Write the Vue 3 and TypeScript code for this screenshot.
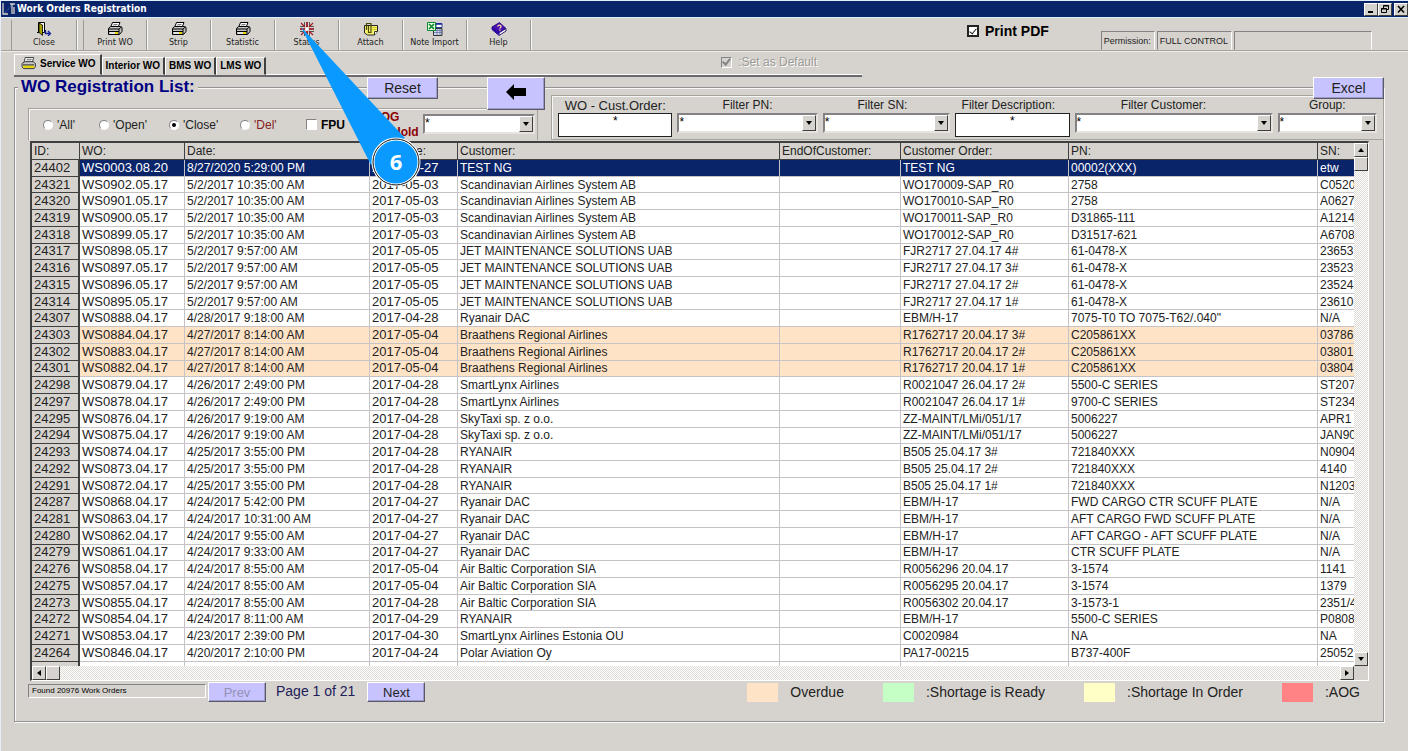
<script setup lang="ts">
import { ref } from 'vue'

type Tool = { label: string; icon: string }
type Row = {
  id: string
  wo: string
  date: string
  due: string
  customer: string
  order: string
  pn: string
  sn: string
  overdue: boolean
}

const tools: Tool[] = [
  { label: 'Print WO', icon: 'printer' },
  { label: 'Strip', icon: 'printer' },
  { label: 'Statistic', icon: 'printer' },
  { label: 'Status', icon: 'status' },
  { label: 'Attach', icon: 'attach' },
  { label: 'Note Import', icon: 'import' },
  { label: 'Help', icon: 'help' },
]

const tabs = ['Service WO', 'Interior WO', 'BMS WO', 'LMS WO']
const states = ['All', 'Open', 'Close', 'Del']
const state = ref('Close')
const fpu = ref(false)
const printPdf = ref(true)
const selected = ref('24402')

const filters = [
  { key: 'order', label: 'WO - Cust.Order:', kind: 'text', big: true },
  { key: 'pn', label: 'Filter PN:', kind: 'select' },
  { key: 'sn', label: 'Filter SN:', kind: 'select' },
  { key: 'description', label: 'Filter Description:', kind: 'text' },
  { key: 'customer', label: 'Filter Customer:', kind: 'select' },
  { key: 'group', label: 'Group:', kind: 'select' },
]

const columns = [
  { key: 'id', label: 'ID:' },
  { key: 'wo', label: 'WO:' },
  { key: 'date', label: 'Date:' },
  { key: 'due', label: 'Due Date:' },
  { key: 'customer', label: 'Customer:' },
  { key: 'end', label: 'EndOfCustomer:' },
  { key: 'order', label: 'Customer Order:' },
  { key: 'pn', label: 'PN:' },
  { key: 'sn', label: 'SN:' },
]

const source = `24402|WS0003.08.20|8/27/2020 5:29:00 PM|2020-08-27|TEST NG|TEST NG|00002(XXX)|etw
24321|WS0902.05.17|5/2/2017 10:35:00 AM|2017-05-03|Scandinavian Airlines System AB|WO170009-SAP_R0|2758|C0520
24320|WS0901.05.17|5/2/2017 10:35:00 AM|2017-05-03|Scandinavian Airlines System AB|WO170010-SAP_R0|2758|A0627
24319|WS0900.05.17|5/2/2017 10:35:00 AM|2017-05-03|Scandinavian Airlines System AB|WO170011-SAP_R0|D31865-111|A1214
24318|WS0899.05.17|5/2/2017 10:35:00 AM|2017-05-03|Scandinavian Airlines System AB|WO170012-SAP_R0|D31517-621|A6708
24317|WS0898.05.17|5/2/2017 9:57:00 AM|2017-05-05|JET MAINTENANCE SOLUTIONS UAB|FJR2717 27.04.17 4#|61-0478-X|23653
24316|WS0897.05.17|5/2/2017 9:57:00 AM|2017-05-05|JET MAINTENANCE SOLUTIONS UAB|FJR2717 27.04.17 3#|61-0478-X|23523
24315|WS0896.05.17|5/2/2017 9:57:00 AM|2017-05-05|JET MAINTENANCE SOLUTIONS UAB|FJR2717 27.04.17 2#|61-0478-X|23524
24314|WS0895.05.17|5/2/2017 9:57:00 AM|2017-05-05|JET MAINTENANCE SOLUTIONS UAB|FJR2717 27.04.17 1#|61-0478-X|23610
24307|WS0888.04.17|4/28/2017 9:18:00 AM|2017-04-28|Ryanair DAC|EBM/H-17|7075-T0 TO 7075-T62/.040"|N/A
24303|WS0884.04.17|4/27/2017 8:14:00 AM|2017-05-04|Braathens Regional Airlines|R1762717 20.04.17 3#|C205861XX|03786|o
24302|WS0883.04.17|4/27/2017 8:14:00 AM|2017-05-04|Braathens Regional Airlines|R1762717 20.04.17 2#|C205861XX|03801|o
24301|WS0882.04.17|4/27/2017 8:14:00 AM|2017-05-04|Braathens Regional Airlines|R1762717 20.04.17 1#|C205861XX|03804|o
24298|WS0879.04.17|4/26/2017 2:49:00 PM|2017-04-28|SmartLynx Airlines|R0021047 26.04.17 2#|5500-C SERIES|ST207
24297|WS0878.04.17|4/26/2017 2:49:00 PM|2017-04-28|SmartLynx Airlines|R0021047 26.04.17 1#|9700-C SERIES|ST234
24295|WS0876.04.17|4/26/2017 9:19:00 AM|2017-04-28|SkyTaxi sp. z o.o.|ZZ-MAINT/LMi/051/17|5006227|APR1
24294|WS0875.04.17|4/26/2017 9:19:00 AM|2017-04-28|SkyTaxi sp. z o.o.|ZZ-MAINT/LMi/051/17|5006227|JAN90
24293|WS0874.04.17|4/25/2017 3:55:00 PM|2017-04-28|RYANAIR|B505 25.04.17 3#|721840XXX|N0904
24292|WS0873.04.17|4/25/2017 3:55:00 PM|2017-04-28|RYANAIR|B505 25.04.17 2#|721840XXX|4140
24291|WS0872.04.17|4/25/2017 3:55:00 PM|2017-04-28|RYANAIR|B505 25.04.17 1#|721840XXX|N1203
24287|WS0868.04.17|4/24/2017 5:42:00 PM|2017-04-27|Ryanair DAC|EBM/H-17|FWD CARGO CTR SCUFF PLATE|N/A
24281|WS0863.04.17|4/24/2017 10:31:00 AM|2017-04-27|Ryanair DAC|EBM/H-17|AFT CARGO FWD SCUFF PLATE|N/A
24280|WS0862.04.17|4/24/2017 9:55:00 AM|2017-04-27|Ryanair DAC|EBM/H-17|AFT CARGO - AFT SCUFF PLATE|N/A
24279|WS0861.04.17|4/24/2017 9:33:00 AM|2017-04-27|Ryanair DAC|EBM/H-17|CTR SCUFF PLATE|N/A
24276|WS0858.04.17|4/24/2017 8:55:00 AM|2017-05-04|Air Baltic Corporation SIA|R0056296 20.04.17|3-1574|1141
24275|WS0857.04.17|4/24/2017 8:55:00 AM|2017-05-04|Air Baltic Corporation SIA|R0056295 20.04.17|3-1574|1379
24273|WS0855.04.17|4/24/2017 8:55:00 AM|2017-04-28|Air Baltic Corporation SIA|R0056302 20.04.17|3-1573-1|2351/4
24272|WS0854.04.17|4/24/2017 8:11:00 AM|2017-04-29|RYANAIR|EBM/H-17|5500-C SERIES|P0808
24271|WS0853.04.17|4/23/2017 2:39:00 PM|2017-04-30|SmartLynx Airlines Estonia OU|C0020984|NA|NA
24264|WS0846.04.17|4/20/2017 2:10:00 PM|2017-04-24|Polar Aviation Oy|PA17-00215|B737-400F|25052`

const rows: Row[] = source.split('\n').map((line) => {
  const [id, wo, date, due, customer, order, pn, sn, flag] = line.split('|')
  return { id, wo, date, due, customer, order, pn, sn, overdue: flag === 'o' }
})

const legend = [
  { tone: 'overdue', label: 'Overdue' },
  { tone: 'ready', label: ':Shortage is Ready' },
  { tone: 'ordered', label: ':Shortage In Order' },
  { tone: 'urgent', label: ':AOG' },
]
</script>

<template>
  <div class="window">
    <svg class="defs" aria-hidden="true">
      <symbol id="i-printer" viewBox="0 0 16 14">
        <path d="M5.500.5h7.500l-2 5h-7.500z" fill="#fff" stroke="#000" />
        <path d="M6.500 2.500h4M5.500 4.200h4" stroke="#555" stroke-width=".8" />
        <path d="M1.500 6.500l2-2h10l1.500 1v4l-2.500 3h-11z" fill="#c6c3c6" stroke="#000" />
        <path d="M1.500 7h10.500l2.500-2M12 7v5M2 9.500h10" stroke="#000" fill="none" />
        <path d="M3 11h6" stroke="#fff" stroke-width="1.200" />
        <path d="M8 11h3" stroke="#e7d700" stroke-width="2" />
      </symbol>
    </svg>

    <header class="titlebar">
      <svg class="app-icon" viewBox="0 0 14 14" aria-hidden="true">
        <path d="M1 1v11h5M8 2h5M10 2v10M12 5v7" fill="none" stroke="#d6d3ce" stroke-width="1.300" />
        <path d="M3 11L9 4" stroke="#4a82d6" stroke-dasharray="1 1" />
      </svg>
      <h1>Work Orders Registration</h1>
      <div class="win-buttons">
        <button type="button" aria-label="Minimize">
          <svg viewBox="0 0 12 11"><path d="M3 8h5" stroke="#000" stroke-width="2" /></svg>
        </button>
        <button type="button" aria-label="Restore">
          <svg viewBox="0 0 12 11"><path d="M4.500 4V1.500h5v4H8M4 2h6M2.500 4.500h5v4h-5zM2 5h6" fill="none" stroke="#000" /></svg>
        </button>
        <button type="button" aria-label="Close window">
          <svg viewBox="0 0 12 11"><path d="M3 2l6 6.500M9 2L3 8.500" stroke="#000" stroke-width="1.600" /></svg>
        </button>
      </div>
    </header>

    <div class="toolbar">
      <button type="button" class="tool close-tool">
        <svg viewBox="0 0 16 14" aria-hidden="true">
          <path d="M1 10.500h4" stroke="#000" />
          <path d="M2.500.5h6v10h-6z" fill="#fff" stroke="#000" />
          <path d="M3 1l3.500 2v10.500L3 10.500z" fill="#a5a200" stroke="#000" stroke-width=".8" />
          <path d="M9.500 8v3.500h4M12 9l2.500 2.500L12 14" fill="none" stroke="#10209c" stroke-width="1.300" />
        </svg>
        <span>Close</span>
      </button>
      <button v-for="t in tools" :key="t.label" type="button" class="tool">
        <svg v-if="t.icon === 'printer'" viewBox="0 0 16 14" aria-hidden="true"><use href="#i-printer" /></svg>
        <svg v-else-if="t.icon === 'status'" viewBox="0 0 16 14" aria-hidden="true">
          <path d="M8 0v5M8 9v5M1 7h5M10 7h5" stroke="#8c0010" stroke-width="1.600" />
          <path d="M5.500 0v4.500M10.500 0v4.500M5.500 9.500V14M10.500 9.500V14M1 4.500h4.500M10.500 4.500H15M1 9.500h4.500M10.500 9.500H15" stroke="#333" stroke-width=".8" />
          <path d="M2 1l4 4M14 1l-4 4M2 13l4-4M14 13l-4-4" stroke="#a51826" stroke-width="1.200" />
          <circle cx="8" cy="7" r="1.500" fill="#fff" />
        </svg>
        <svg v-else-if="t.icon === 'attach'" viewBox="0 0 16 14" aria-hidden="true">
          <path d="M1.500 3.500h13v6l-3 3.500h-7l-3-2z" fill="#f7f373" stroke="#222" />
          <path d="M11.500 13v-3.500h3" fill="#fff" stroke="#222" stroke-width=".9" />
          <path d="M9.500 5.500h4M9.500 7.500h4" stroke="#c6b600" stroke-width=".8" />
          <path d="M3.500 8V1.500h4.500v9H5.500V4" fill="none" stroke="#4a4800" stroke-width="1.200" />
        </svg>
        <svg v-else-if="t.icon === 'import'" viewBox="0 0 16 14" aria-hidden="true">
          <path d="M9 1.500h6v4H9z" fill="#fff" stroke="#31419c" />
          <path d="M9 2h6" stroke="#10209c" stroke-width="1.500" />
          <path d="M6.500 6.500h8.500v7H6.500z" fill="#d6dbef" stroke="#333" />
          <path d="M7 8.500h8M7 10.500h8M10 7v6M13 7v6" stroke="#52699c" stroke-width=".7" />
          <path d="M.5.500h8v8h-8z" fill="#e7ffe7" stroke="#108a31" />
          <path d="M2 2l5 5M7 2L2 7" stroke="#10862a" stroke-width="1.700" />
        </svg>
        <svg v-else viewBox="0 0 16 14" aria-hidden="true">
          <path d="M1 5l7.500-4.500 6.500 6-6.500 4z" fill="#4a10b5" stroke="#18006b" stroke-width=".8" />
          <path d="M1 5v2.500l7 6 7-4.500V6.500l-6.500 4z" fill="#fff" stroke="#18006b" stroke-width=".9" />
          <path d="M1 5l7.500 5.500v3L1 7.500z" fill="#2900a5" />
          <path d="M6.500 4.500q1.500-2.500 3.500-.5 .5 1.500-1.500 2.500M9 7.500v1.200" fill="none" stroke="#ffdb9c" stroke-width="1.300" />
        </svg>
        <span>{{ t.label }}</span>
      </button>
      <label class="print-pdf">
        <input v-model="printPdf" type="checkbox" />
        <span>Print PDF</span>
      </label>
      <div class="status-cells">
        <span>Permission:</span>
        <span>FULL CONTROL</span>
        <span class="status-blank"></span>
      </div>
    </div>

    <nav class="tabs">
      <button v-for="(t, i) in tabs" :key="t" type="button" :class="['tab', { active: i === 0 }]">
        <svg v-if="i === 0" viewBox="0 0 16 14" aria-hidden="true">
          <path d="M4.500.5h9l-1.500 6h-9z" fill="#fff" stroke="#333" />
          <path d="M6 2.500h5.500M5.500 4.500H11" stroke="#666" />
          <path d="M1 7l3-2h9l2.500 2v3.500L14 12.500H2.500L1 10.500z" fill="#c6c3c6" stroke="#333" />
          <path d="M2 10.500h12" stroke="#e7d700" stroke-width="2.500" />
          <path d="M2 8.500h12" stroke="#222" />
        </svg>
        {{ t }}
      </button>
      <label class="set-default">
        <input type="checkbox" checked disabled />
        <span>:Set as Default</span>
      </label>
    </nav>

    <main class="panel">
      <div class="panel-head">
        <h2>WO Registration List:</h2>
        <button type="button" class="btn reset">Reset</button>
        <button type="button" class="btn back" aria-label="Back">
          <svg viewBox="0 0 20 18"><path d="M0 9l8-8v4h12v8H8v4z" fill="#000" /></svg>
        </button>
        <button type="button" class="btn excel">Excel</button>
      </div>

      <div class="filters">
        <div class="state-box">
          <label v-for="s in states" :key="s" :class="['radio', { del: s === 'Del' }]">
            <input v-model="state" type="radio" name="state" :value="s" />
            <span>'{{ s }}'</span>
          </label>
          <label class="fpu">
            <input v-model="fpu" type="checkbox" />
            <span>FPU</span>
          </label>
          <label class="aog" for="hold"><span>AOG</span><span class="hold">Hold</span></label>
          <div class="combo hold-combo">
            <select id="hold"><option>*</option></select>
            <i></i>
          </div>
        </div>
        <div class="filter-box">
          <div v-for="f in filters" :key="f.key" :class="['filter', 'f-' + f.key]">
            <label :for="f.key" :class="{ big: f.big }">{{ f.label }}</label>
            <input v-if="f.kind === 'text'" :id="f.key" type="text" value="*" />
            <div v-else class="combo">
              <select :id="f.key"><option>*</option></select>
              <i></i>
            </div>
          </div>
        </div>
      </div>

      <section class="grid">
        <div class="viewport">
          <table>
            <colgroup>
              <col v-for="c in columns" :key="c.key" :class="'c-' + c.key" />
            </colgroup>
            <thead>
              <tr><th v-for="c in columns" :key="c.key" scope="col">{{ c.label }}</th></tr>
            </thead>
            <tbody>
              <tr
                v-for="r in rows"
                :key="r.id"
                :class="{ overdue: r.overdue, selected: r.id === selected }"
                @click="selected = r.id"
              >
                <th scope="row">{{ r.id }}</th>
                <td class="num">{{ r.wo }}</td>
                <td>{{ r.date }}</td>
                <td class="num">{{ r.due }}</td>
                <td>{{ r.customer }}</td>
                <td></td>
                <td>{{ r.order }}</td>
                <td>{{ r.pn }}</td>
                <td>{{ r.sn }}</td>
              </tr>
              <tr class="rest">
                <th></th>
                <td v-for="n in 8" :key="n"></td>
              </tr>
            </tbody>
          </table>
        </div>
        <div class="vbar">
          <button type="button" aria-label="Scroll up"><i class="up"></i></button>
          <span class="thumb"></span>
          <button type="button" class="end" aria-label="Scroll down"><i class="down"></i></button>
        </div>
        <div class="hbar">
          <button type="button" aria-label="Scroll left"><i class="left"></i></button>
          <span class="thumb"></span>
          <button type="button" class="end" aria-label="Scroll right"><i class="right"></i></button>
        </div>
      </section>

      <footer class="foot">
        <span class="found">Found 20976 Work Orders</span>
        <button type="button" class="btn" disabled>Prev</button>
        <span class="page">Page 1 of 21</span>
        <button type="button" class="btn">Next</button>
        <ul class="legend">
          <li v-for="l in legend" :key="l.tone" :class="l.tone">
            <i></i><span>{{ l.label }}</span>
          </li>
        </ul>
      </footer>
    </main>

    <svg class="callout" width="130" height="170" viewBox="0 0 130 170" role="img" aria-label="Step 6">
      <path d="M6 6L110 117L76 144z" fill="#0a9aff" />
      <circle cx="101" cy="141" r="23" fill="#0a9aff" stroke="#fff" stroke-width="3" />
      <circle cx="101" cy="141" r="23" fill="none" stroke="#111" stroke-width="1" />
      <text x="101" y="149" text-anchor="middle">6</text>
    </svg>
  </div>
</template>

<style>
html,
body {
  margin: 0;
  background: #d6d3ce;
}
</style>

<style scoped>
* {
  box-sizing: border-box;
}
.window {
  position: relative;
  display: flex;
  flex-direction: column;
  height: 100vh;
  padding-bottom: 29px;
  border-left: 1px solid #e7effa;
  background: #d6d3ce;
  color: #222;
  font-family: "Liberation Sans", Arial, sans-serif;
  font-size: 12px;
}
.defs {
  position: absolute;
  width: 0;
  height: 0;
}
button,
input,
select {
  margin: 0;
  padding: 0;
  border-radius: 0;
  color: inherit;
  font: inherit;
}
.titlebar {
  display: flex;
  flex: none;
  align-items: center;
  height: 18px;
  padding-left: 1px;
  border-top: 1px solid #dff0fa;
  border-bottom: 1px solid #dff0fa;
  background: #0a246a;
  color: #fff;
}
.app-icon {
  width: 14px;
  height: 14px;
  margin-right: 1px;
}
h1 {
  margin: 0;
  font-family: "DejaVu Sans Condensed", "DejaVu Sans", sans-serif;
  font-size: 10px;
  line-height: 14px;
}
.win-buttons {
  display: flex;
  margin-left: auto;
}
.win-buttons button {
  display: flex;
  width: 14px;
  height: 13px;
  border: 1px solid;
  border-color: #fff #404040 #404040 #fff;
  background: #d6d3ce;
}
.win-buttons button:last-child {
  margin-left: 2px;
}
.win-buttons svg {
  width: 12px;
  height: 11px;
}
.toolbar {
  display: flex;
  flex: none;
  align-items: stretch;
  height: 33px;
  padding: 2px 0 0 10px;
  border-bottom: 1px solid #a5a29c;
  box-shadow: 0 1px #efebe7;
}
.tool {
  display: flex;
  flex-direction: column;
  align-items: center;
  width: 64px;
  padding-top: 2px;
  border: 0;
  border-right: 1px solid #9c9a94;
  box-shadow: 1px 0 #f7f7f7;
  background: none;
  font-family: "DejaVu Sans Condensed", "DejaVu Sans", sans-serif;
  font-size: 9px;
  line-height: 12px;
  white-space: nowrap;
}
.close-tool {
  width: 66px;
  margin-right: 6px;
  border-left: 1px solid #9c9a94;
}
.close-tool + .tool {
  border-left: 1px solid #9c9a94;
}
.tool svg {
  width: 16px;
  height: 14px;
}
input[type="checkbox"] {
  display: grid;
  place-items: center;
  width: 11px;
  height: 11px;
  appearance: none;
  border: 1px solid;
  border-color: #848284 #fff #fff #848284;
  background: #fff;
}
input[type="checkbox"]:checked::after {
  width: 3px;
  height: 6px;
  margin-top: -2px;
  border: solid #222;
  border-width: 0 2px 2px 0;
  content: "";
  transform: rotate(40deg);
}
.print-pdf {
  display: flex;
  align-items: center;
  gap: 6px;
  height: 22px;
  margin-left: auto;
  color: #000;
  font-size: 14px;
  font-weight: bold;
}
.print-pdf input[type="checkbox"] {
  width: 12px;
  height: 12px;
  border: 2px solid #222;
}
.print-pdf input[type="checkbox"]:checked::after {
  border-width: 0 1px 1px 0;
}
.status-cells {
  display: flex;
  gap: 2px;
  align-self: flex-end;
  margin: 0 36px 0 52px;
  font-size: 9px;
  line-height: 18px;
}
.status-cells span {
  height: 19px;
  padding: 0 3px 0 2px;
  border: 1px solid;
  border-color: #848284 #fff transparent #848284;
}
.status-cells .status-blank {
  width: 138px;
}
.tabs {
  display: flex;
  flex: none;
  align-items: flex-end;
  width: 848px;
  height: 23px;
  margin: 3px 0 0 13px;
  border-bottom: 2px solid #6b696b;
  box-shadow: inset 0 -1px #fff;
}
.tab {
  height: 18px;
  padding: 0 3px;
  border: 1px solid;
  border-color: #fff #404040 transparent #fff;
  border-right-width: 2px;
  background: #d6d3ce;
  color: #000;
  font-size: 10px;
  font-weight: bold;
  line-height: 16px;
  white-space: nowrap;
}
.tab.active {
  display: flex;
  align-items: center;
  gap: 4px;
  height: 21px;
  padding: 0 4px 2px 6px;
}
.tab.active svg {
  width: 15px;
  height: 13px;
}
.set-default {
  display: flex;
  align-self: flex-start;
  align-items: center;
  gap: 6px;
  height: 16px;
  margin-left: auto;
  padding-right: 45px;
  color: #9c9a94;
  text-shadow: 1px 1px #fff;
}
.set-default input[type="checkbox"] {
  background: #d6d3ce;
}
.set-default input[type="checkbox"]:checked::after {
  border-color: #848284;
}
.panel {
  position: relative;
  display: flex;
  flex: 1;
  flex-direction: column;
  min-height: 0;
  margin: 0 24px 0 13px;
  padding-bottom: 20px;
}
.panel::before {
  position: absolute;
  inset: 10px 0 0;
  border: 1px solid #949294;
  box-shadow: inset 1px 1px #f7f7f7, 1px 1px #f7f7f7;
  content: "";
  pointer-events: none;
}
.panel > * {
  position: relative;
}
.panel-head {
  z-index: 2;
  display: flex;
  flex: none;
  align-items: flex-start;
  height: 18px;
}
h2 {
  width: 180px;
  margin: 0 169px 0 4px;
  padding: 0 3px;
  background: #d6d3ce;
  color: #000084;
  font-size: 17px;
  line-height: 19px;
  white-space: nowrap;
}
.btn {
  display: block;
  border: 1px solid;
  border-color: #fff #5a596b #5a596b #fff;
  box-shadow: inset -1px -1px #9c9ac6;
  background: #c6c3ff;
  text-align: center;
}
.btn:disabled {
  color: #9492b5;
}
.reset,
.excel {
  width: 71px;
  height: 22px;
  font-size: 14px;
}
.back {
  width: 58px;
  height: 33px;
  margin-left: 49px;
}
.back svg {
  width: 20px;
  height: 18px;
}
.excel {
  margin-left: auto;
}
.filters {
  display: flex;
  flex: none;
  align-items: flex-end;
  gap: 13px;
  height: 45px;
}
.state-box {
  display: flex;
  align-items: center;
  width: 510px;
  height: 32px;
  margin-left: 14px;
  padding-left: 14px;
  border: 1px solid #a5a29c;
  border-bottom: 0;
  box-shadow: inset 1px 1px #f7f7f7;
}
.radio {
  display: flex;
  align-items: center;
  gap: 4px;
  min-width: 56px;
}
.radio:nth-child(2) {
  min-width: 70px;
}
.radio:nth-child(3) {
  min-width: 71px;
}
.radio:nth-child(4) {
  min-width: 66px;
}
.radio input {
  display: grid;
  place-items: center;
  width: 10px;
  height: 10px;
  appearance: none;
  border: 1px solid;
  border-color: #848284 #fff #fff #848284;
  border-radius: 50%;
  background: #fff;
}
.radio input:checked::after {
  width: 4px;
  height: 4px;
  border-radius: 50%;
  background: #000;
  content: "";
}
.del {
  color: #842020;
}
.fpu {
  display: flex;
  align-items: center;
  gap: 4px;
  width: 66px;
  color: #000;
  font-weight: bold;
}
.aog {
  display: flex;
  flex-direction: column;
  width: 51px;
  color: #8c0000;
  font-weight: bold;
  line-height: 15px;
}
.hold {
  padding-left: 20px;
}
.combo {
  position: relative;
  display: flex;
  height: 20px;
  border: 2px solid;
  border-color: #848284 #e7e3de #e7e3de #848284;
  background: #fff;
}
.combo select {
  flex: 1;
  min-width: 0;
  padding-bottom: 3px;
  border: 0;
  appearance: none;
  background: #fff;
  color: #000;
}
.combo i {
  position: absolute;
  top: 0;
  right: 0;
  display: grid;
  place-items: center;
  width: 14px;
  height: 16px;
  border: 1px solid;
  border-color: #fff #404040 #404040 #fff;
  background: #d6d3ce;
  pointer-events: none;
}
.combo i::after,
.down::after,
.up::after,
.left::after,
.right::after {
  display: block;
  border: 3px solid transparent;
  border-top: 4px solid #000;
  border-bottom: 0;
  content: "";
}
.hold-combo {
  flex: 1;
  margin: 0 2px 2px 0;
}
.filter-box {
  display: flex;
  flex: 1;
  gap: 5px;
  height: 45px;
  padding: 2px 6px 0 6px;
  border: 1px solid #a5a29c;
  box-shadow: inset 1px 1px #f7f7f7;
}
.filter {
  flex: 115 1 0;
  min-width: 0;
}
.f-pn {
  flex-grow: 141;
}
.f-sn {
  flex-grow: 128;
}
.f-customer {
  flex-grow: 199;
}
.f-group {
  flex-grow: 100;
}
.filter label {
  display: block;
  line-height: 15px;
  text-align: center;
  white-space: nowrap;
}
.filter label.big {
  font-size: 13px;
}
.f-sn label,
.f-description label {
  padding-right: 8px;
}
.f-customer label {
  padding-right: 20px;
}
.filter > input {
  display: block;
  width: 100%;
  height: 24px;
  padding-bottom: 8px;
  border: 1px solid #222;
  background: #fff;
  color: #000;
  text-align: center;
}
.grid {
  display: grid;
  flex: 1;
  grid-template: minmax(0, 1fr) 14px / minmax(0, 1fr) 14px;
  min-height: 0;
  margin: 1px 15px 0 16px;
  border: 1px solid #404040;
  border-width: 2px 1px 1px 2px;
  border-right-color: #fff;
  border-bottom-color: #fff;
  background: #d6d3ce;
}
.viewport {
  min-height: 0;
  overflow: hidden;
  background: #fff;
}
table {
  width: 100%;
  height: 100%;
  border-collapse: separate;
  border-spacing: 0;
  table-layout: fixed;
}
.c-id {
  width: 48px;
}
.c-wo {
  width: 105px;
}
.c-date {
  width: 185px;
}
.c-due {
  width: 88px;
}
.c-end {
  width: 121px;
}
.c-order {
  width: 168px;
}
.c-pn {
  width: 249px;
}
.c-sn {
  width: 36px;
}
th,
td {
  overflow: hidden;
  padding: 0 0 0 2px;
  border-right: 1px solid #c6c3c6;
  border-bottom: 1px solid #c6c3c6;
  font-weight: normal;
  line-height: 14px;
  text-align: left;
  white-space: nowrap;
}
thead tr {
  height: 17px;
}
thead th {
  border-right-color: #404040;
  border-bottom-color: #404040;
  background: #d6d3ce;
}
tbody th {
  border-right: 2px solid #404040;
  border-bottom-color: #404040;
  background: #d6d3ce;
  font-size: 13px;
}
.num {
  font-size: 13px;
}
td:last-child,
thead th:last-child {
  border-right: 0;
}
.overdue td {
  background: #ffe3c6;
}
.selected td {
  background: #0a246a;
  color: #fff;
}
.rest {
  height: 4px;
}
.rest th,
.rest td {
  border-bottom: 0;
  line-height: 4px;
}
.vbar,
.hbar {
  display: flex;
  background: repeating-conic-gradient(#fff 0 25%, #dedbd6 0 50%) 0 0 / 2px 2px;
}
.vbar {
  flex-direction: column;
}
.vbar button,
.hbar button,
.thumb {
  display: grid;
  place-items: center;
  width: 14px;
  height: 14px;
  border: 1px solid;
  border-color: #fff #404040 #404040 #fff;
  background: #d6d3ce;
}
.vbar .end {
  margin-top: auto;
}
.hbar .end {
  margin-left: auto;
}
.up {
  transform: rotate(180deg);
}
.left {
  transform: rotate(90deg);
}
.right {
  transform: rotate(-90deg);
}
.foot {
  display: flex;
  flex: none;
  align-items: flex-start;
  height: 21px;
  padding: 1px 24px 0 14px;
}
.found {
  width: 178px;
  height: 14px;
  margin: 2px 2px 0 0;
  padding-left: 3px;
  border: 1px solid;
  border-color: #848284 #fff #fff #848284;
  color: #000;
  font-size: 8px;
  line-height: 11px;
}
.foot .btn {
  width: 58px;
  height: 20px;
  font-size: 13px;
}
.page {
  padding: 0 12px 0 10px;
  color: #21205a;
  font-size: 14px;
  line-height: 18px;
}
.legend {
  display: flex;
  gap: 39px;
  margin: 1px 0 0 auto;
  padding: 0;
  list-style: none;
  font-size: 14px;
  line-height: 18px;
}
.legend li {
  display: flex;
  gap: 12px;
}
.legend i {
  width: 31px;
  height: 19px;
}
.legend .overdue i {
  background: #ffe3c6;
}
.legend .ready i {
  background: #c6ffc6;
}
.legend .ordered i {
  background: #ffffc6;
}
.legend .urgent i {
  background: #ff8284;
}
.callout {
  position: absolute;
  top: 21px;
  left: 294px;
  z-index: 5;
  pointer-events: none;
}
.callout text {
  fill: #fff;
  font-family: "Open Sans", "Noto Sans", sans-serif;
  font-size: 22px;
  font-weight: bold;
}
</style>
